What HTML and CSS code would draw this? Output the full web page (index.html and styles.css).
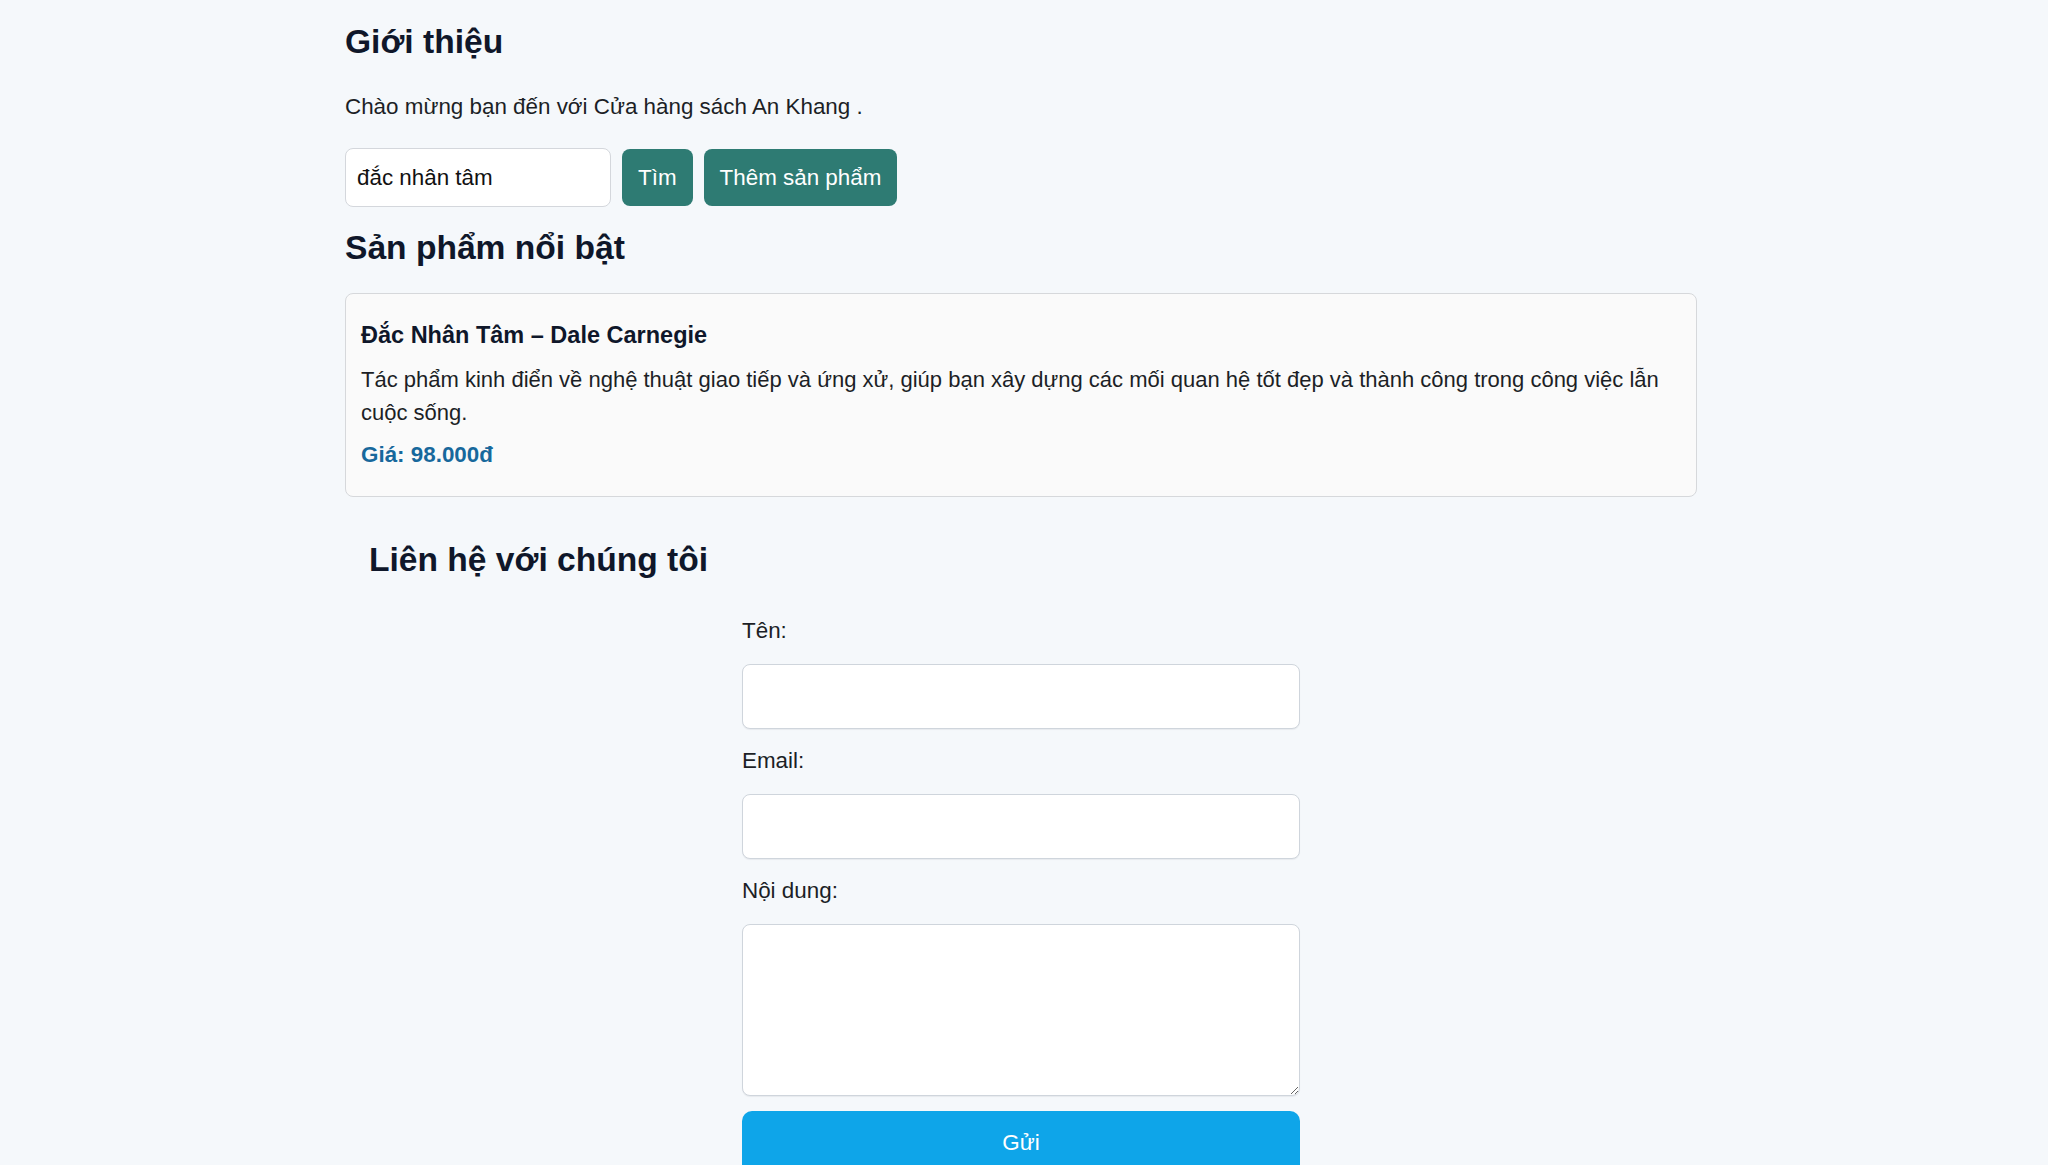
FILE: index.html
```html
<!DOCTYPE html>
<html lang="vi">
<head>
<meta charset="utf-8">
<title>Cửa hàng sách An Khang</title>
<link rel="stylesheet" href="styles.css">
</head>
<body>
<main class="container">
  <section class="intro">
    <h2 class="heading heading-first">Giới thiệu</h2>
    <p class="lead">Chào mừng bạn đến với Cửa hàng sách An Khang .</p>
    <div class="search-row">
      <input class="search-input" type="text" value="đắc nhân tâm">
      <button class="btn btn-teal" type="button">Tìm</button>
      <button class="btn btn-teal" type="button">Thêm sản phẩm</button>
    </div>
  </section>

  <section class="featured">
    <h2 class="heading heading-featured">Sản phẩm nổi bật</h2>
    <article class="card">
      <h3 class="card-title">Đắc Nhân Tâm – Dale Carnegie</h3>
      <p class="card-desc">Tác phẩm kinh điển về nghệ thuật giao tiếp và ứng xử, giúp bạn xây dựng các mối quan hệ tốt đẹp và thành công trong công việc lẫn cuộc sống.</p>
      <p class="card-price">Giá: 98.000đ</p>
    </article>
  </section>

  <section class="contact">
    <h2 class="heading heading-contact">Liên hệ với chúng tôi</h2>
    <form class="contact-form">
      <label class="field-label" for="name">Tên:</label>
      <input class="field-input" id="name" type="text">
      <label class="field-label" for="email">Email:</label>
      <input class="field-input" id="email" type="email">
      <label class="field-label" for="msg">Nội dung:</label>
      <textarea class="field-textarea" id="msg"></textarea>
      <button class="btn-submit" type="button">Gửi</button>
    </form>
  </section>
</main>
</body>
</html>
```

FILE: styles.css
```css
* {
  box-sizing: border-box;
}

html, body {
  margin: 0;
  padding: 0;
}

body {
  padding-right: 6px;
  background: #f5f8fb;
  font-family: "Liberation Sans", Arial, Helvetica, sans-serif;
  font-size: 22.4px;
  line-height: 32px;
  color: #1c1f26;
}

.container {
  width: 1352px;
  margin: 0 auto;
}

.heading {
  font-size: 33.6px;
  line-height: 40px;
  font-weight: 700;
  color: #0f172a;
  margin: 0;
}

.heading-first {
  padding-top: 22px;
}

.lead {
  margin: 29px 0 0;
}

.search-row {
  display: flex;
  align-items: center;
  gap: 11px;
  margin-top: 25px;
}

.search-input {
  width: 266px;
  height: 59px;
  padding: 0 11px;
  border: 1px solid #d4d7dc;
  border-radius: 8px;
  background: #fff;
  font-family: inherit;
  font-size: 22.4px;
  color: #111;
}

.btn {
  height: 57px;
  padding: 0 16px;
  border: none;
  border-radius: 8px;
  font-family: inherit;
  font-size: 22.4px;
  color: #fff;
  cursor: pointer;
}

.btn-teal {
  background: #2e7b73;
}

.heading-featured {
  margin-top: 21px;
}

.card {
  margin-top: 25px;
  border: 1px solid #d6d8db;
  border-radius: 8px;
  background: #fafafa;
  padding: 16px 15px 16px 15px;
}

.card-title {
  margin: 9px 0 0;
  font-size: 23.5px;
  line-height: 32px;
  font-weight: 700;
  color: #0f172a;
}

.card-desc {
  margin: 12px 0 0;
  font-size: 22px;
  line-height: 33px;
}

.card-price {
  margin: 10px 0 9px;
  font-weight: 700;
  color: #17689c;
}

.contact {
  padding: 0 24px;
}

.heading-contact {
  margin-top: 43px;
}

.contact-form {
  width: 558px;
  margin: 35px auto 0;
  display: flex;
  flex-direction: column;
}

.field-label {
  display: block;
  color: #1c1f26;
}

.field-input,
.field-textarea {
  display: block;
  width: 100%;
  margin: 17px 0 16px;
  border: 1px solid #cfd5dc;
  border-radius: 8px;
  background: #fff;
  box-shadow: 0 1px 1px rgba(15, 23, 42, 0.06);
  font-family: inherit;
  font-size: 22.4px;
  padding: 0 12px;
}

.field-input {
  height: 65px;
}

.field-textarea {
  height: 172px;
  margin-bottom: 15px;
  padding: 12px;
}

.btn-submit {
  display: block;
  width: 100%;
  padding: 16px;
  border: none;
  border-radius: 10px;
  background: #0ea5e9;
  color: #fff;
  font-family: inherit;
  font-size: 22.4px;
  line-height: 32px;
  cursor: pointer;
}
```
